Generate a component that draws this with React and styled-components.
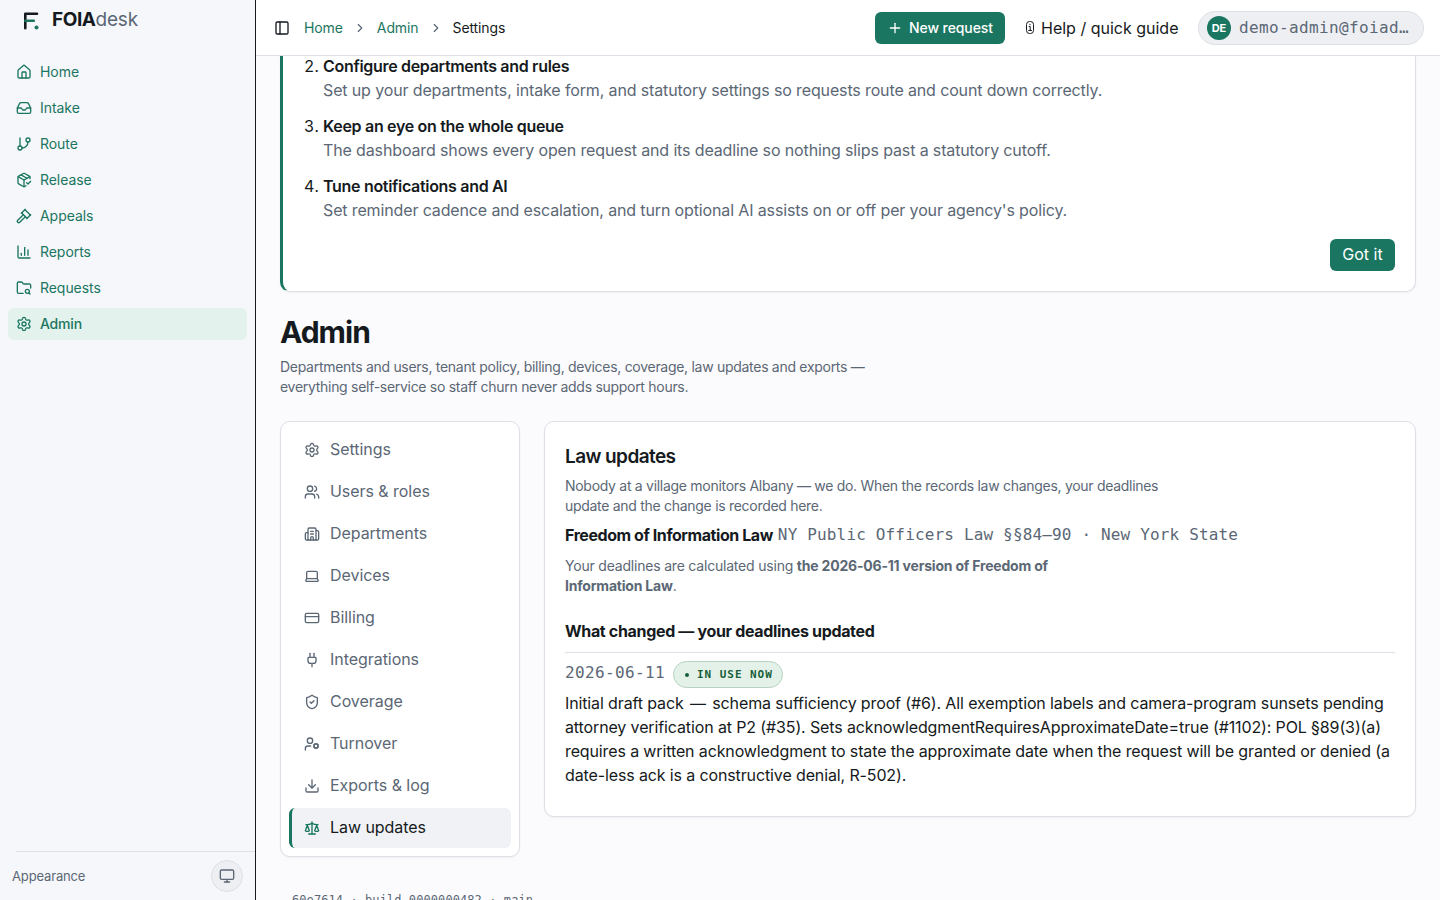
import React from 'react';
import styled, { createGlobalStyle, css } from 'styled-components';
import {
  House, Inbox, GitBranch, PackageCheck, Gavel, ChartColumn, FolderSearch, Settings,
  Users, Building2, Laptop, CreditCard, Plug, ShieldCheck, UserCog, Download, Scale,
  Monitor, PanelLeft, ChevronRight, Plus
} from 'lucide-react';

const colors = {
  ink: '#151a20',
  muted: '#5b6775',
  green: '#1a7660',
  line: '#dde0e6',
  page: '#fbfbfd',
  sidebar: '#f6f7fb'
};

const mono = "'DejaVu Sans Mono', 'Liberation Mono', monospace";

const GlobalStyle = createGlobalStyle`
  * {
    box-sizing: border-box;
  }

  body {
    margin: 0;
    overflow: hidden;
    background: ${colors.page};
    color: ${colors.ink};
    font-family: Inter, 'Liberation Sans', sans-serif;
    font-size: 16px;
    line-height: 24px;
  }

  h1, h2, h3, p, ol {
    margin: 0;
    padding: 0;
  }

  svg {
    flex-shrink: 0;
  }
`;

const Shell = styled.div`
  display: flex;
  height: 900px;
  overflow: hidden;
`;

const Sidebar = styled.aside`
  display: flex;
  flex-direction: column;
  width: 256px;
  flex-shrink: 0;
  background: ${colors.sidebar};
  border-right: 1px solid ${colors.ink};
`;

const Brand = styled.div`
  display: flex;
  align-items: center;
  gap: 12px;
  height: 42px;
  padding-left: 24px;
`;

const BrandName = styled.span`
  font-size: 19px;
  font-weight: 700;
  letter-spacing: -0.45px;
  line-height: 22px;
  padding-bottom: 2px;

  span {
    font-weight: 400;
    letter-spacing: -0.2px;
    color: ${colors.muted};
  }
`;

const SideNav = styled.nav`
  display: flex;
  flex-direction: column;
  gap: 4px;
  padding: 14px 8px;
  flex: 1;
`;

const SideLink = styled.a`
  display: flex;
  align-items: center;
  gap: 8px;
  height: 32px;
  padding: 0 8px;
  border-radius: 6px;
  color: ${colors.green};
  background: ${props => (props.$active ? '#e3f2ec' : 'transparent')};
  font-size: 14px;
  font-weight: ${props => (props.$active ? 500 : 400)};
  letter-spacing: ${props => (props.$active ? '-0.2px' : '-0.05px')};
`;

const Appearance = styled.div`
  display: flex;
  align-items: center;
  justify-content: space-between;
  height: 49px;
  padding-right: 12px;
  margin-left: 16px;
  border-top: 1px solid ${colors.line};
  color: ${colors.muted};
  font-size: 13px;
  letter-spacing: -0.15px;

  span {
    margin-left: -4px;
    padding-bottom: 1px;
  }
`;

const ThemeButton = styled.button`
  display: flex;
  align-items: center;
  justify-content: center;
  width: 32px;
  height: 32px;
  padding: 0;
  border: 1px solid ${colors.line};
  border-radius: 50%;
  background: #eeeff3;
  color: ${colors.muted};
`;

const Main = styled.div`
  flex: 1;
  min-width: 0;
`;

const TopBar = styled.header`
  display: flex;
  align-items: center;
  height: 56px;
  padding: 0 16px 0 18px;
  background: #fff;
  border-bottom: 1px solid ${colors.line};
`;

const Crumbs = styled.div`
  display: flex;
  align-items: center;
  gap: 10px;
  margin-left: 14px;
  flex: 1;
  font-size: 14px;
  letter-spacing: -0.1px;

  a {
    color: ${colors.green};
  }

  svg {
    color: ${colors.muted};
  }
`;

const Button = styled.button`
  display: flex;
  align-items: center;
  justify-content: center;
  gap: 6px;
  width: ${props => props.$width};
  height: 32px;
  padding: ${props => (props.$small ? '0' : '0 0 2px')};
  border: 0;
  border-radius: 6px;
  background: ${colors.green};
  color: #fff;
  font: ${props => (props.$small ? '500 14px' : '400 16px')} Inter, sans-serif;
  letter-spacing: ${props => (props.$small ? '-0.1px' : '0')};
`;

const Help = styled.a`
  display: flex;
  align-items: center;
  gap: 6px;
  width: 153px;
  margin: 0 20px;
  white-space: nowrap;
`;

const Account = styled.div`
  display: flex;
  align-items: center;
  gap: 8px;
  width: 226px;
  height: 34px;
  padding: 0 8px;
  border: 1px solid ${colors.line};
  border-radius: 17px;
  background: #eeeff3;
  color: ${colors.muted};
  font-family: ${mono};
  letter-spacing: 0.37px;
`;

const Avatar = styled.span`
  width: 24px;
  height: 24px;
  border-radius: 50%;
  background: ${colors.green};
  color: #fff;
  font: 700 11px/24px Inter, sans-serif;
  letter-spacing: 0;
  text-align: center;
`;

const Content = styled.main`
  padding: 0 24px;
`;

const card = css`
  background: #fff;
  border: 1px solid ${colors.line};
  border-radius: 10px;
  box-shadow: 0 1px 2px rgba(20, 26, 40, 0.05);
`;

const GuideCard = styled.section`
  ${card}
  display: flex;
  flex-direction: column;
  height: 236px;
  padding: 0 20px 20px;
  border-top: 0;
  border-left: 3px solid ${colors.green};
  border-radius: 0 0 10px 10px;
`;

const Steps = styled.ol`
  display: flex;
  flex-direction: column;
  gap: 12px;
  margin-top: -2px;
  padding-left: 20px;
  flex: 1;
`;

const Step = styled.li`
  strong {
    display: block;
    font-weight: 600;
    letter-spacing: -0.31px;
  }

  p {
    color: ${colors.muted};
    letter-spacing: -0.135px;
  }
`;

const GuideFooter = styled.div`
  display: flex;
  justify-content: flex-end;
`;

const PageTitle = styled.h1`
  margin-top: 20px;
  font-size: 30px;
  font-weight: 700;
  line-height: 40px;
  letter-spacing: -1px;
`;

const Lead = styled.p`
  color: ${colors.muted};
  font-size: 14px;
  line-height: 20px;
  letter-spacing: ${props => props.$spacing || '-0.29px'};
  white-space: nowrap;

  ${PageTitle} + & {
    margin-top: 5px;
  }
`;

const Columns = styled.div`
  display: grid;
  grid-template-columns: 240px minmax(0, 1fr);
  align-items: start;
  gap: 24px;
  margin-top: 24px;
`;

const TabList = styled.nav`
  ${card}
  display: flex;
  flex-direction: column;
  gap: 2px;
  padding: 8px;
`;

const Tab = styled.a`
  display: flex;
  align-items: center;
  gap: 10px;
  height: 40px;
  padding-left: 12px;
  border-left: 3px solid ${props => (props.$active ? colors.green : 'transparent')};
  border-radius: 6px;
  background: ${props => (props.$active ? '#f1f2f6' : 'transparent')};
  color: ${props => (props.$active ? colors.ink : colors.muted)};
  letter-spacing: -0.05px;

  svg {
    color: ${props => (props.$active ? colors.green : colors.muted)};
  }

  span {
    padding-bottom: 2px;
  }
`;

const Panel = styled.section`
  ${card}
  height: 396px;
  padding: 21px 20px 20px;
`;

const PanelTitle = styled.h2`
  margin-bottom: 5px;
  font-size: 19px;
  font-weight: 600;
  line-height: 28px;
  letter-spacing: -0.58px;
`;

const Statute = styled.p`
  display: flex;
  gap: 5px;
  margin: 7px 0 9px;
  white-space: nowrap;

  strong {
    font-weight: 700;
    letter-spacing: -0.43px;
  }

  span {
    color: ${colors.muted};
    font-family: ${mono};
    letter-spacing: 0.16px;
  }
`;

const SubTitle = styled.h3`
  margin-top: 22px;
  padding-bottom: 7px;
  border-bottom: 1px solid ${colors.line};
  font-size: 16px;
  font-weight: 700;
  line-height: 27px;
  letter-spacing: -0.33px;
`;

const Entry = styled.div`
  display: flex;
  align-items: center;
  gap: 8px;
  height: 27px;
  margin-top: 8px;

  time {
    padding-bottom: 4px;
    color: ${colors.muted};
    font-family: ${mono};
    letter-spacing: 0.37px;
  }
`;

const Badge = styled.span`
  display: flex;
  align-items: center;
  gap: 8px;
  width: 110px;
  height: 27px;
  padding-left: 11px;
  border: 1px solid #b5d2c3;
  border-radius: 14px;
  background: #e4f1e8;
  color: #17603a;
  font: 600 11px ${mono};
  letter-spacing: 0.95px;
  white-space: nowrap;

  &::before {
    content: '';
    width: 4px;
    height: 4px;
    border-radius: 50%;
    background: #17603a;
  }
`;

const Note = styled.p`
  margin-top: 3px;
  letter-spacing: -0.125px;
  white-space: nowrap;
`;

const Dash = styled.span`
  margin: 0 2px;
`;

const BuildInfo = styled.footer`
  margin: 34px 0 0 12px;
  color: ${colors.muted};
  font: 12px/18px ${mono};
  letter-spacing: 0.08px;
`;

const Logo = () => (
  <svg width="16" height="18" viewBox="0 0 16 18" fill="none" strokeWidth="2.6" strokeLinecap="round">
    <path d="M1.3 16.2V1.8H13" stroke={colors.ink} strokeLinejoin="round" />
    <path d="M1.3 8.8H9.8" stroke={colors.green} />
    <circle cx="12.5" cy="15.4" r="2" fill={colors.green} />
  </svg>
);

const InfoIcon = () => (
  <svg width="10" height="14" viewBox="0 0 10 14" fill="none" stroke={colors.ink}>
    <rect x="1.5" y="0.5" width="7" height="12" rx="3" />
    <path d="M5 2.8v1.4M3.8 5.5h1.4v4M3.3 9.5h3.6" />
  </svg>
);

const sideLinks = [
  { label: 'Home', icon: House },
  { label: 'Intake', icon: Inbox },
  { label: 'Route', icon: GitBranch },
  { label: 'Release', icon: PackageCheck },
  { label: 'Appeals', icon: Gavel },
  { label: 'Reports', icon: ChartColumn },
  { label: 'Requests', icon: FolderSearch },
  { label: 'Admin', icon: Settings, active: true }
];

const tabs = [
  { label: 'Settings', icon: Settings },
  { label: 'Users & roles', icon: Users },
  { label: 'Departments', icon: Building2 },
  { label: 'Devices', icon: Laptop },
  { label: 'Billing', icon: CreditCard },
  { label: 'Integrations', icon: Plug },
  { label: 'Coverage', icon: ShieldCheck },
  { label: 'Turnover', icon: UserCog },
  { label: 'Exports & log', icon: Download },
  { label: 'Law updates', icon: Scale, active: true }
];

const steps = [
  {
    title: 'Configure departments and rules',
    text: 'Set up your departments, intake form, and statutory settings so requests route and count down correctly.'
  },
  {
    title: 'Keep an eye on the whole queue',
    text: 'The dashboard shows every open request and its deadline so nothing slips past a statutory cutoff.'
  },
  {
    title: 'Tune notifications and AI',
    text: "Set reminder cadence and escalation, and turn optional AI assists on or off per your agency's policy."
  }
];

const App = () => (
  <>
    <GlobalStyle />
    <Shell>
      <Sidebar>
        <Brand>
          <Logo />
          <BrandName>FOIA<span>desk</span></BrandName>
        </Brand>
        <SideNav>
          {sideLinks.map(({ label, icon: Icon, active }) => (
            <SideLink key={label} $active={active}>
              <Icon size={16} />
              {label}
            </SideLink>
          ))}
        </SideNav>
        <Appearance>
          <span>Appearance</span>
          <ThemeButton><Monitor size={16} /></ThemeButton>
        </Appearance>
      </Sidebar>

      <Main>
        <TopBar>
          <PanelLeft size={16} />
          <Crumbs>
            <a>Home</a>
            <ChevronRight size={14} />
            <a>Admin</a>
            <ChevronRight size={14} />
            <span>Settings</span>
          </Crumbs>
          <Button $width="130px" $small><Plus size={16} />New request</Button>
          <Help><InfoIcon />Help / quick guide</Help>
          <Account><Avatar>DE</Avatar>demo-admin@foiad…</Account>
        </TopBar>

        <Content>
          <GuideCard>
            <Steps start={2}>
              {steps.map(step => (
                <Step key={step.title}>
                  <strong>{step.title}</strong>
                  <p>{step.text}</p>
                </Step>
              ))}
            </Steps>
            <GuideFooter><Button $width="65px">Got it</Button></GuideFooter>
          </GuideCard>

          <PageTitle>Admin</PageTitle>
          <Lead>
            Departments and users, tenant policy, billing, devices, coverage, law updates and exports —<br />
            everything self-service so staff churn never adds support hours.
          </Lead>

          <Columns>
            <TabList>
              {tabs.map(({ label, icon: Icon, active }) => (
                <Tab key={label} $active={active}>
                  <Icon size={16} />
                  <span>{label}</span>
                </Tab>
              ))}
            </TabList>

            <Panel>
              <PanelTitle>Law updates</PanelTitle>
              <Lead>
                Nobody at a village monitors Albany — we do. When the records law changes, your deadlines<br />
                update and the change is recorded here.
              </Lead>
              <Statute>
                <strong>Freedom of Information Law</strong>
                <span>NY Public Officers Law §§84–90 · New York State</span>
              </Statute>
              <Lead $spacing="-0.2px">
                Your deadlines are calculated using <strong>the 2026-06-11 version of Freedom of<br />
                Information Law</strong>.
              </Lead>
              <SubTitle>What changed — your deadlines updated</SubTitle>
              <Entry>
                <time>2026-06-11</time>
                <Badge>IN USE NOW</Badge>
              </Entry>
              <Note>
                Initial draft pack <Dash>—</Dash> schema sufficiency proof (#6). All exemption labels and camera-program sunsets pending<br />
                attorney verification at P2 (#35). Sets acknowledgmentRequiresApproximateDate=true (#1102): POL §89(3)(a)<br />
                requires a written acknowledgment to state the approximate date when the request will be granted or denied (a<br />
                date-less ack is a constructive denial, R-502).
              </Note>
            </Panel>
          </Columns>
          <BuildInfo>60e7614 · build 0000000482 · main</BuildInfo>
        </Content>
      </Main>
    </Shell>
  </>
);

export default App;
